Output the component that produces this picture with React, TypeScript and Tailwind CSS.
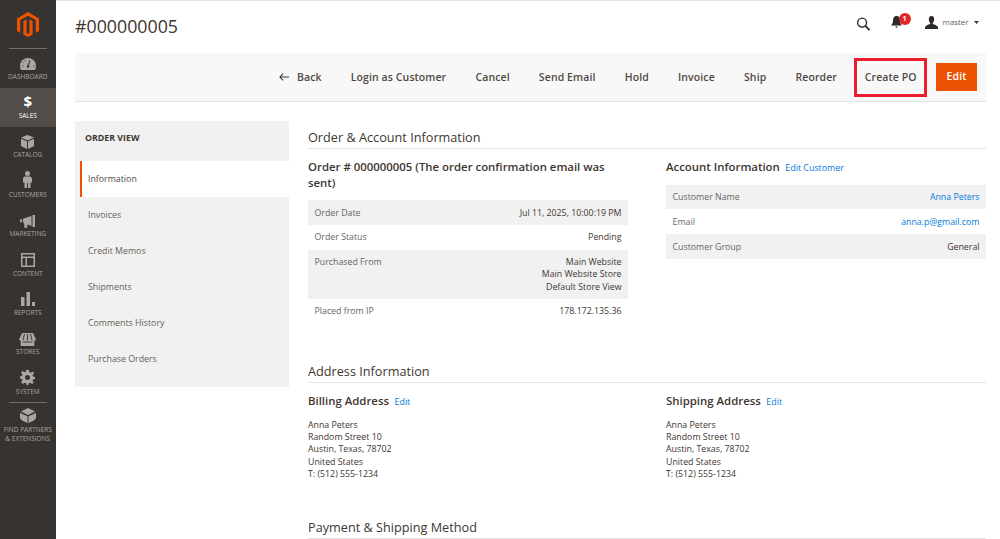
import React from "react";

const font = { fontFamily: '"Open Sans", "Noto Sans", sans-serif' };

function Logo() {
  return (
    <svg width="22" height="25" viewBox="0 0 23 26" fill="#eb5202">
      <path d="M11.5 0 L23 6.6 V19.8 L19.7 21.7 V8.5 L11.5 3.8 L3.3 8.5 V21.7 L0 19.8 V6.6 Z" />
      <path d="M10 7.6 V22 L11.5 22.9 L13 22 V7.6 L16.3 9.5 V23.6 L11.5 26 L6.7 23.6 V9.5 Z" />
    </svg>
  );
}

const c = "#aaa6a0";
const icons: Record<string, React.ReactNode> = {
  DASHBOARD: (
    <svg width="16" height="12" viewBox="0 0 16 12" fill={c}>
      <path d="M8 0a8 8 0 0 0-8 8c0 1.500.4 2.800 1 4h14c.6-1.200 1-2.500 1-4a8 8 0 0 0-8-8z" />
      <path d="M10 2.500 8 8" stroke="#373330" strokeWidth="1.100" />
      <path d="M5 1.800v1.500M2.500 4l1 1M2 8h1.500M13 8h1.500" stroke="#373330" strokeWidth="0.600" />
      <circle cx="8" cy="8.500" r="1.300" fill="#373330" />
    </svg>
  ),
  SALES: <span className="text-[15px] leading-[16px] font-bold text-white">$</span>,
  CATALOG: (
    <svg width="13" height="14" viewBox="0 0 13 14" fill={c}>
      <path d="M6.500 0 13 2.600 6.500 5.500 0 2.600z" />
      <path d="M0 3.800 6 6.500V14L0 11zM13 3.800 7 6.500V14l6-3z" />
    </svg>
  ),
  CUSTOMERS: (
    <svg width="9" height="17" viewBox="0 0 9 17" fill={c}>
      <circle cx="4.500" cy="2.600" r="2.500" />
      <path d="M1.500 5.500h6L9 7v4.500H7.500V17h-2.500v-5h-1v5H1.500v-5.500H0V7z" />
    </svg>
  ),
  MARKETING: (
    <svg width="15" height="13" viewBox="0 0 15 13" fill={c}>
      <path d="M0 4.500 2 4v3.500L0 7zM3 3.800 11.500 1v10L7.500 9.500 7 13H4.500L4 8 3 7.800zM12.500 0H15v12h-2.500z" />
    </svg>
  ),
  CONTENT: (
    <svg width="14" height="14" viewBox="0 0 14 14" fill={c}>
      <path fillRule="evenodd" d="M0 0h14v14H0zM1.500 1.500v2h11v-2zM1.500 5v7.500h3V5zM6 5v7.500h6.500V5z" />
    </svg>
  ),
  REPORTS: (
    <svg width="14" height="14" viewBox="0 0 14 14" fill={c}>
      <path d="M0 5h3.500v9H0zM5.500 0H9v14H5.500zM11 10h3v4h-3z" />
    </svg>
  ),
  STORES: (
    <svg width="17" height="13" viewBox="0 0 17 13" fill={c}>
      <path d="M3 0h11l3 6.500c-.5 1-1.200 1-1.700 1v5.500H1.700V7.500C1.200 7.500.5 7.500 0 6.500z" />
      <path d="M5.500 1 4 7M8.500 1v6.500M11.500 1 13 7M3.500 9h10" stroke="#373330" strokeWidth="0.900" />
    </svg>
  ),
  SYSTEM: (
    <svg width="15" height="15" viewBox="0 0 15 15" fill={c}>
      <path fillRule="evenodd" d="M6 0h3l.4 2.200 1.500.6L12.800 1.600 14.200 3.400 12.500 5l.5 1.500 2 .5v2l-2 .5-.5 1.500 1.400 1.800L12 14l-1.800-1.200-1.500.5L8.500 15h-2l-.4-1.700-1.500-.5L2.800 14 1 12.300l1.400-1.800L1.900 9 0 8.500v-2L1.900 6l.5-1.500L1 2.800 2.800 1l1.800 1.300 1.100-.4zM7.500 5a2.500 2.500 0 1 0 0 5 2.500 2.500 0 0 0 0-5z" />
    </svg>
  ),
  PARTNERS: (
    <svg width="16" height="15" viewBox="0 0 16 15" fill={c}>
      <path d="M8 0 15 3.500 8 7 1 3.500z" />
      <path d="M0 5 7.500 8.300V15L2 12.500 0 10zM16 5 8.500 8.300V15l5.500-2.500 2-2.500z" />
    </svg>
  ),
};

function NavItem({ label, lines, active }: { label: string; lines?: string[]; active?: boolean }) {
  const key = lines ? "PARTNERS" : label;
  return (
    <div className={`flex flex-col items-center h-[39.400px] pt-[4.400px] ${active ? "bg-[#524d49]" : ""}`}>
      <div className="h-[17px] flex items-end justify-center">{icons[key]}</div>
      <div className={`text-[6.500px] leading-[12px] mt-[0.600px] whitespace-nowrap text-center ${active ? "text-white" : "text-[#aaa6a0]"}`}>
        {lines ? lines.map((l, i) => <div key={l} className={i === 0 ? "leading-[9.200px] mt-[1.500px]" : "leading-[9.200px]"}>{l}</div>) : label}
      </div>
    </div>
  );
}

function Row({ k, children, shade }: { k: string; children: React.ReactNode; shade?: boolean }) {
  return (
    <div className={`flex justify-between px-[6.500px] pt-[6.500px] pb-[5.900px] text-[8.800px] leading-[12.300px] ${shade ? "bg-[#f1f1f1]" : ""}`}>
      <span className="text-[#666]">{k}</span>
      <div className="text-right text-[#41362f]">{children}</div>
    </div>
  );
}

function SectionTitle({ children }: { children: React.ReactNode }) {
  return (
    <div className="text-[12.700px] leading-[18px] text-[#41362f] border-b border-[#e3e3e3] pb-[1.500px]">{children}</div>
  );
}

function Address({ title }: { title: string }) {
  return (
    <div className="w-[320px]">
      <div className="flex items-baseline gap-[5.500px]">
        <span className="text-[11.400px] leading-[15.500px] font-semibold text-[#41362f]">{title}</span>
        <span className="text-[8.900px] text-[#007bdb]">Edit</span>
      </div>
      <div className="mt-[10.300px] text-[8.800px] leading-[12.300px] text-[#41362f]">
        <div>Anna Peters</div>
        <div>Random Street 10</div>
        <div>Austin, Texas, 78702</div>
        <div>United States</div>
        <div>T: (512) 555-1234</div>
      </div>
    </div>
  );
}

export default function App() {
  const actions = ["Login as Customer", "Cancel", "Send Email", "Hold", "Invoice", "Ship"];
  const side = ["Invoices", "Credit Memos", "Shipments", "Comments History", "Purchase Orders"];
  return (
    <div style={font} className="h-[539px] w-[1000px] overflow-hidden flex bg-white">
      <aside className="w-[55.500px] shrink-0 bg-[#373330] flex flex-col">
        <div className="h-[47.600px] flex justify-center items-start pt-[12px] shrink-0">
          <Logo />
        </div>
        <div className="mx-[9px] h-px bg-[#736e69]" />
        <NavItem label="DASHBOARD" />
        <NavItem label="SALES" active />
        <NavItem label="CATALOG" />
        <NavItem label="CUSTOMERS" />
        <NavItem label="MARKETING" />
        <NavItem label="CONTENT" />
        <NavItem label="REPORTS" />
        <NavItem label="STORES" />
        <NavItem label="SYSTEM" />
        <div className="mx-[9px] h-px bg-[#736e69] mt-[-1px]" />
        <NavItem label="PARTNERS" lines={["FIND PARTNERS", "& EXTENSIONS"]} />
      </aside>

      <main className="flex-1 min-w-0 pl-[19.500px] pr-[14px] border-t border-[#e3e3e3]">
        <header className="h-[52px] flex items-center justify-between">
          <h1 className="text-[17.800px] text-[#41362f] mt-[-1px]">#000000005</h1>
          <div className="flex items-center text-[#41362f] mr-[7px] mt-[-9px]">
            <svg width="15" height="14" viewBox="0 0 15 15" fill="none" stroke="#2f2a27" strokeWidth="1.500" className="mt-[2px]">
              <circle cx="6" cy="6" r="4.800" />
              <path d="M9.500 9.500 14 14" strokeWidth="1.900" />
            </svg>
            <div className="relative ml-[20px] w-[20px] h-[13px]">
              <svg width="11" height="12" viewBox="0 0 11 12" fill="#2f2a27" className="absolute left-0 top-0">
                <path d="M5.500 0C3 0 2 2 2 4.500 2 6.500 1.500 8 0 9.500h11C9.500 8 9 6.500 9 4.500 9 2 8 0 5.500 0zM4 10.500h3L5.500 12z" />
              </svg>
              <span className="absolute left-[8px] top-[-3px] w-[12px] h-[12px] rounded-full bg-[#e22626] text-white text-[7px] font-bold leading-[12px] text-center">1</span>
            </div>
            <svg width="13" height="13" viewBox="0 0 13 13" fill="#2f2a27" className="ml-[14px]">
              <path d="M6.500 0C4.500 0 3.800 1.500 3.800 3.200c0 1.500.7 3 1.400 3.600v1.200C3.500 8.700 1 9.300 0 11v2h13v-2c-1-1.700-3.500-2.300-5.200-3V6.800c.7-.6 1.400-2.100 1.400-3.600C9.200 1.500 8.500 0 6.500 0z" />
            </svg>
            <span className="ml-[5px] text-[7.900px] text-[#676056]">master</span>
            <svg width="5" height="3" viewBox="0 0 5 3" fill="#41362f" className="ml-[5.500px]">
              <path d="M0 0h5L2.500 3z" />
            </svg>
          </div>
        </header>

        <div className="h-[49px] bg-[#f8f8f8] border-b border-[#e3e3e3] flex items-center justify-end pr-[9px] text-[10.500px] font-semibold text-[#514943] tracking-[0.1px]">
          <svg width="10" height="8" viewBox="0 0 10 8" fill="none" stroke="#41362f" strokeWidth="1.100" className="mr-[8px]">
            <path d="M10 4H1M4 .7 1 4l3 3.300" />
          </svg>
          <span className="mr-[29.200px] pt-[2px]">Back</span>
          {actions.map((a) => (
            <span key={a} className="mr-[29.200px] pt-[2px]">{a}</span>
          ))}
          <span className="mr-[16.500px] pt-[2px]">Reorder</span>
          <div className="mr-[9px] mt-[1.500px] pl-[1px] w-[73.500px] h-[38.600px] border-[3px] border-[#ed1c2e] flex items-center justify-center">
            Create PO
          </div>
          <div className="w-[41px] h-[28.500px] bg-[#eb5202] text-white flex items-center justify-center">Edit</div>
        </div>

        <div className="flex mt-[19px]">
          <nav className="w-[214px] h-[266px] shrink-0 bg-[#f1f1f1]">
            <div className="h-[40px] flex items-center pl-[10px] pb-[5px] text-[8.800px] font-bold text-[#41362f]">ORDER VIEW</div>
            <div className="ml-[5px] h-[36px] bg-white border-l-[2px] border-[#eb5202] flex items-center pl-[6px] pt-[1px] text-[8.800px] font-medium text-[#514943]">
              Information
            </div>
            {side.map((s) => (
              <div key={s} className="h-[36px] flex items-center pl-[13px] pt-[1px] text-[8.800px] font-medium text-[#676056]">{s}</div>
            ))}
          </nav>

          <div className="flex-1 min-w-0 pl-[19px]">
            <div className="mt-[7px]">
              <SectionTitle>Order &amp; Account Information</SectionTitle>
            </div>
            <div className="flex justify-between mt-[10.500px]">
              <div className="w-[320px]">
                <div className="text-[11.400px] leading-[15.500px] font-semibold text-[#41362f]">
                  Order # 000000005 (The order confirmation email was sent)
                </div>
                <div className="mt-[10.200px]">
                  <Row k="Order Date" shade>Jul 11, 2025, 10:00:19 PM</Row>
                  <Row k="Order Status">Pending</Row>
                  <Row k="Purchased From" shade>
                    <div>Main Website</div>
                    <div>Main Website Store</div>
                    <div>Default Store View</div>
                  </Row>
                  <Row k="Placed from IP">178.172.135.36</Row>
                </div>
              </div>
              <div className="w-[320px]">
                <div className="flex items-baseline gap-[5.500px]">
                  <span className="text-[11.400px] leading-[15.500px] font-semibold text-[#41362f]">Account Information</span>
                  <span className="text-[8.900px] text-[#007bdb]">Edit Customer</span>
                </div>
                <div className="mt-[10.200px]">
                  <Row k="Customer Name" shade><span className="text-[#007bdb]">Anna Peters</span></Row>
                  <Row k="Email"><span className="text-[#007bdb]">anna.p@gmail.com</span></Row>
                  <Row k="Customer Group" shade>General</Row>
                </div>
              </div>
            </div>

            <div className="mt-[38.500px]">
              <SectionTitle>Address Information</SectionTitle>
            </div>
            <div className="flex justify-between mt-[10.500px]">
              <Address title="Billing Address" />
              <Address title="Shipping Address" />
            </div>

            <div className="mt-[38px]">
              <SectionTitle>Payment &amp; Shipping Method</SectionTitle>
            </div>
          </div>
        </div>
      </main>
    </div>
  );
}
